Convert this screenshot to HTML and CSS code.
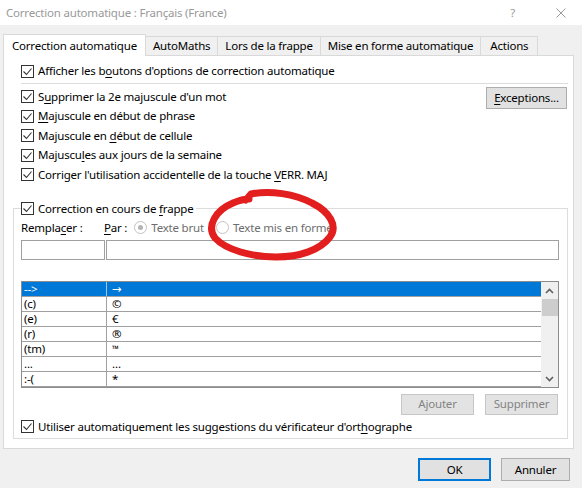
FILE: index.html
```html
<!DOCTYPE html>
<html lang="fr">
<head>
  <meta charset="UTF-8">
  <title>Correction automatique</title>
  <link rel="stylesheet" href="styles.css">
</head>
<body>
  <div class="titlebar">
    <span class="title">Correction automatique : Français (France)</span>
    <span class="help">?</span>
    <svg class="close" width="10" height="10" viewBox="0 0 10 10"><path d="M0.5 0.5l9 9M9.5 0.5l-9 9"/></svg>
  </div>

  <div class="tabs">
    <div class="tab active">Correction automatique</div>
    <div class="tab">AutoMaths</div>
    <div class="tab">Lors de la frappe</div>
    <div class="tab">Mise en forme automatique</div>
    <div class="tab">Actions</div>
  </div>

  <div class="panel">
    <label class="check first">
      <svg class="cb" viewBox="0 0 13 13"><rect x="0.5" y="0.5" width="12" height="12"/><path d="M2.5 6.5l3 3 5-6"/></svg>
      <span>Afficher les b<u>o</u>utons d'options de correction automatique</span>
    </label>
    <div class="sep"></div>

    <div class="rules">
      <div class="rule-list">
        <label class="check"><svg class="cb" viewBox="0 0 13 13"><rect x="0.5" y="0.5" width="12" height="12"/><path d="M2.5 6.5l3 3 5-6"/></svg><span>S<u>u</u>pprimer la 2e majuscule d'un mot</span></label>
        <label class="check"><svg class="cb" viewBox="0 0 13 13"><rect x="0.5" y="0.5" width="12" height="12"/><path d="M2.5 6.5l3 3 5-6"/></svg><span><u>M</u>ajuscule en début de phrase</span></label>
        <label class="check"><svg class="cb" viewBox="0 0 13 13"><rect x="0.5" y="0.5" width="12" height="12"/><path d="M2.5 6.5l3 3 5-6"/></svg><span>Majuscule en <u>d</u>ébut de cellule</span></label>
        <label class="check"><svg class="cb" viewBox="0 0 13 13"><rect x="0.5" y="0.5" width="12" height="12"/><path d="M2.5 6.5l3 3 5-6"/></svg><span>Majuscu<u>l</u>es aux jours de la semaine</span></label>
        <label class="check"><svg class="cb" viewBox="0 0 13 13"><rect x="0.5" y="0.5" width="12" height="12"/><path d="M2.5 6.5l3 3 5-6"/></svg><span>Corriger l'utilisation accidentelle de la touche <u>V</u>ERR. MAJ</span></label>
      </div>
      <button class="btn exceptions"><u>E</u>xceptions...</button>
    </div>

    <fieldset class="group">
      <legend>
        <label class="check"><svg class="cb" viewBox="0 0 13 13"><rect x="0.5" y="0.5" width="12" height="12"/><path d="M2.5 6.5l3 3 5-6"/></svg><span>Correction en cours de <u>f</u>rappe</span></label>
      </legend>

      <div class="labels">
        <span class="lbl-replace">Rempla<u>c</u>er :</span>
        <span class="lbl-by"><u>P</u>ar :</span>
        <span class="radio checked"></span><span class="dim">Texte brut</span>
        <span class="radio"></span><span class="dim">Texte mis en forme</span>
      </div>

      <div class="fields">
        <div class="field short"></div>
        <div class="field long"></div>
      </div>

      <div class="list">
        <div class="rows">
          <div class="row selected"><span class="key">--&gt;</span><span class="val sym">→</span></div>
          <div class="row"><span class="key">(c)</span><span class="val">©</span></div>
          <div class="row"><span class="key">(e)</span><span class="val">€</span></div>
          <div class="row"><span class="key">(r)</span><span class="val">®</span></div>
          <div class="row"><span class="key">(tm)</span><span class="val small">™</span></div>
          <div class="row"><span class="key">...</span><span class="val">…</span></div>
          <div class="row"><span class="key">:-(</span><span class="val">*</span></div>
        </div>
        <div class="scrollbar">
          <svg class="arrow" width="9" height="6" viewBox="0 0 9 6"><path d="M1 5l3.5-3.5L8 5"/></svg>
          <div class="thumb"></div>
          <svg class="arrow down" width="9" height="6" viewBox="0 0 9 6"><path d="M1 1l3.5 3.5L8 1"/></svg>
        </div>
      </div>

      <div class="list-buttons">
        <button class="btn" disabled>Ajouter</button>
        <button class="btn" disabled>Supprimer</button>
      </div>

      <label class="check last"><svg class="cb" viewBox="0 0 13 13"><rect x="0.5" y="0.5" width="12" height="12"/><path d="M2.5 6.5l3 3 5-6"/></svg><span>Utiliser automatiquement les suggestions du vérificateur d'ort<u>h</u>ographe</span></label>
    </fieldset>
  </div>

  <div class="footer">
    <button class="btn ok">OK</button>
    <button class="btn cancel">Annuler</button>
  </div>

  <!-- hand-drawn marker around the second option -->
  <svg class="marker" width="582" height="488" viewBox="0 0 582 488">
    <path d="M246 200 L251 194 C270 190, 295 194, 312 203 C330 212, 338 226, 330 237 C320 250, 300 257, 276 257 C252 257, 226 250, 215 238 C206 226, 216 210, 233 203 C240 200, 244 199, 249 199"/>
  </svg>
</body>
</html>
```

FILE: styles.css
```css
body {
  margin: 0;
  width: 582px;
  height: 488px;
  overflow: hidden;
  position: relative;
  background: #f0f0f0;
  font-family: "Noto Sans", sans-serif;
  font-size: 11.5px;
  letter-spacing: -0.2px;
  line-height: 16px;
  color: #000;
}

u {
  text-underline-offset: 2px;
}

/* window title */
.titlebar {
  height: 25px;
  background: #fff;
  display: flex;
  align-items: center;
  padding-left: 6px;
  color: #999;
}

.title {
  flex: 1;
}

.help {
  margin-right: 41px;
}

.close {
  margin-right: 16px;
  stroke: #999;
  stroke-width: 1;
  fill: none;
}

/* tab strip */
.tabs {
  display: flex;
  align-items: flex-end;
  height: 21px;
  margin-top: 9px;
  padding-left: 3px;
}

.tab {
  height: 19px;
  box-sizing: border-box;
  padding: 0 7px;
  border: 1px solid #d9d9d9;
  border-bottom: none;
  border-left: none;
  background: #f0f0f0;
  line-height: 18px;
}

.tab:last-child {
  padding: 0 9px;
}

.tab.active {
  height: 22px;
  margin-bottom: -1px;
  border-left: 1px solid #d9d9d9;
  background: #fff;
  position: relative;
  z-index: 1;
  padding: 0 8px;
  line-height: 21px;
}

/* main page */
.panel {
  margin-left: 3px;
  width: 571px;
  height: 394px;
  box-sizing: border-box;
  border: 1px solid #d9d9d9;
  background: #fff;
  padding: 6px 5px 0 9px;
}

.check {
  display: flex;
  align-items: center;
  height: 18px;
  white-space: nowrap;
}

.cb {
  width: 13px;
  height: 13px;
  margin-right: 4px;
  flex-shrink: 0;
}

.cb rect {
  fill: #fff;
  stroke: #333;
}

.cb path {
  fill: none;
  stroke: #333;
  stroke-width: 1.1;
}

.first {
  margin-left: 8px;
}

.sep {
  height: 1px;
  background: #dcdcdc;
  margin: 3px 0 0 8px;
}

.rules {
  display: flex;
  justify-content: space-between;
  align-items: flex-start;
  margin: 3px 1px 0 8px;
}

.rule-list .check {
  height: 19.5px;
}

.btn {
  font: inherit;
  letter-spacing: inherit;
  color: #000;
  background: #e1e1e1;
  border: 1px solid #adadad;
  height: 22px;
  padding: 0;
  line-height: 18px;
}

.btn:disabled {
  color: #838383;
  background: #e3e3e3;
  border-color: #c6c6c6;
}

.exceptions {
  width: 81px;
}

/* typing correction group */
.group {
  margin: 15px 0 0;
  padding: 0 8px 2px 7px;
  border: 1px solid #dcdcdc;
}

.group legend {
  padding: 0 3px 0 0;
}

.labels {
  display: flex;
  align-items: center;
  height: 16px;
  margin-top: 2px;
}

.lbl-replace {
  width: 83px;
}

.lbl-by {
  margin-right: 7px;
}

.radio {
  width: 11px;
  height: 11px;
  border: 1px solid #c3c3c3;
  border-radius: 50%;
  margin-right: 4px;
  position: relative;
  flex-shrink: 0;
}

.radio.checked::after {
  content: "";
  position: absolute;
  left: 3px;
  top: 3px;
  width: 5px;
  height: 5px;
  border-radius: 50%;
  background: #b4b4b4;
}

.dim {
  color: #6d6d6d;
  margin-right: 12px;
}

.fields {
  display: flex;
  gap: 1px;
  margin-top: 4px;
}

.field {
  height: 20px;
  box-sizing: border-box;
  border: 1px solid #a0a0a0;
  background: #fff;
}

.field.short {
  width: 84px;
}

.field.long {
  flex: 1;
}

.list {
  margin-top: 21px;
  height: 107px;
  box-sizing: border-box;
  border: 1px solid #8c8c8c;
  display: flex;
}

.rows {
  flex: 1;
}

.row {
  display: flex;
  height: 15px;
  box-sizing: border-box;
  border-bottom: 1px solid #a0a0a0;
  font-size: 11.5px;
  line-height: 14px;
}

.row.selected {
  background: #0078d7;
  color: #fff;
}

.key {
  width: 82px;
  padding-left: 2px;
  border-right: 1px solid #a0a0a0;
}

.selected .key {
  border-right-color: #9ec7ea;
}

.val {
  padding-left: 5px;
}

.val.sym {
  font-family: "DejaVu Sans", sans-serif;
}

.val.small {
  font-size: 9px;
}

.scrollbar {
  width: 17px;
  background: #f0f0f0;
  display: flex;
  flex-direction: column;
  align-items: center;
}

.arrow {
  margin-top: 6px;
  stroke: #606060;
  stroke-width: 1.6;
  fill: none;
}

.arrow.down {
  margin: auto 0 5px;
}

.thumb {
  width: 16px;
  height: 17px;
  margin-top: 5px;
  background: #cdcdcd;
}

.list-buttons {
  display: flex;
  justify-content: flex-end;
  gap: 11px;
  margin: 6px 1px 0 0;
}

.list-buttons .btn {
  width: 73px;
  height: 21px;
}

.last {
  margin-top: 3px;
}

/* dialog buttons */
.footer {
  display: flex;
  justify-content: flex-end;
  gap: 10px;
  padding: 9px 12px 0 0;
}

.footer .btn {
  height: 23px;
}

.ok {
  width: 73px;
  border: 2px solid #0078d7;
}

.cancel {
  width: 69px;
}

.marker {
  position: absolute;
  left: 0;
  top: 0;
  pointer-events: none;
}

.marker path {
  fill: none;
  stroke: #e31e1e;
  stroke-width: 7;
  stroke-linecap: round;
  stroke-linejoin: round;
}
```
